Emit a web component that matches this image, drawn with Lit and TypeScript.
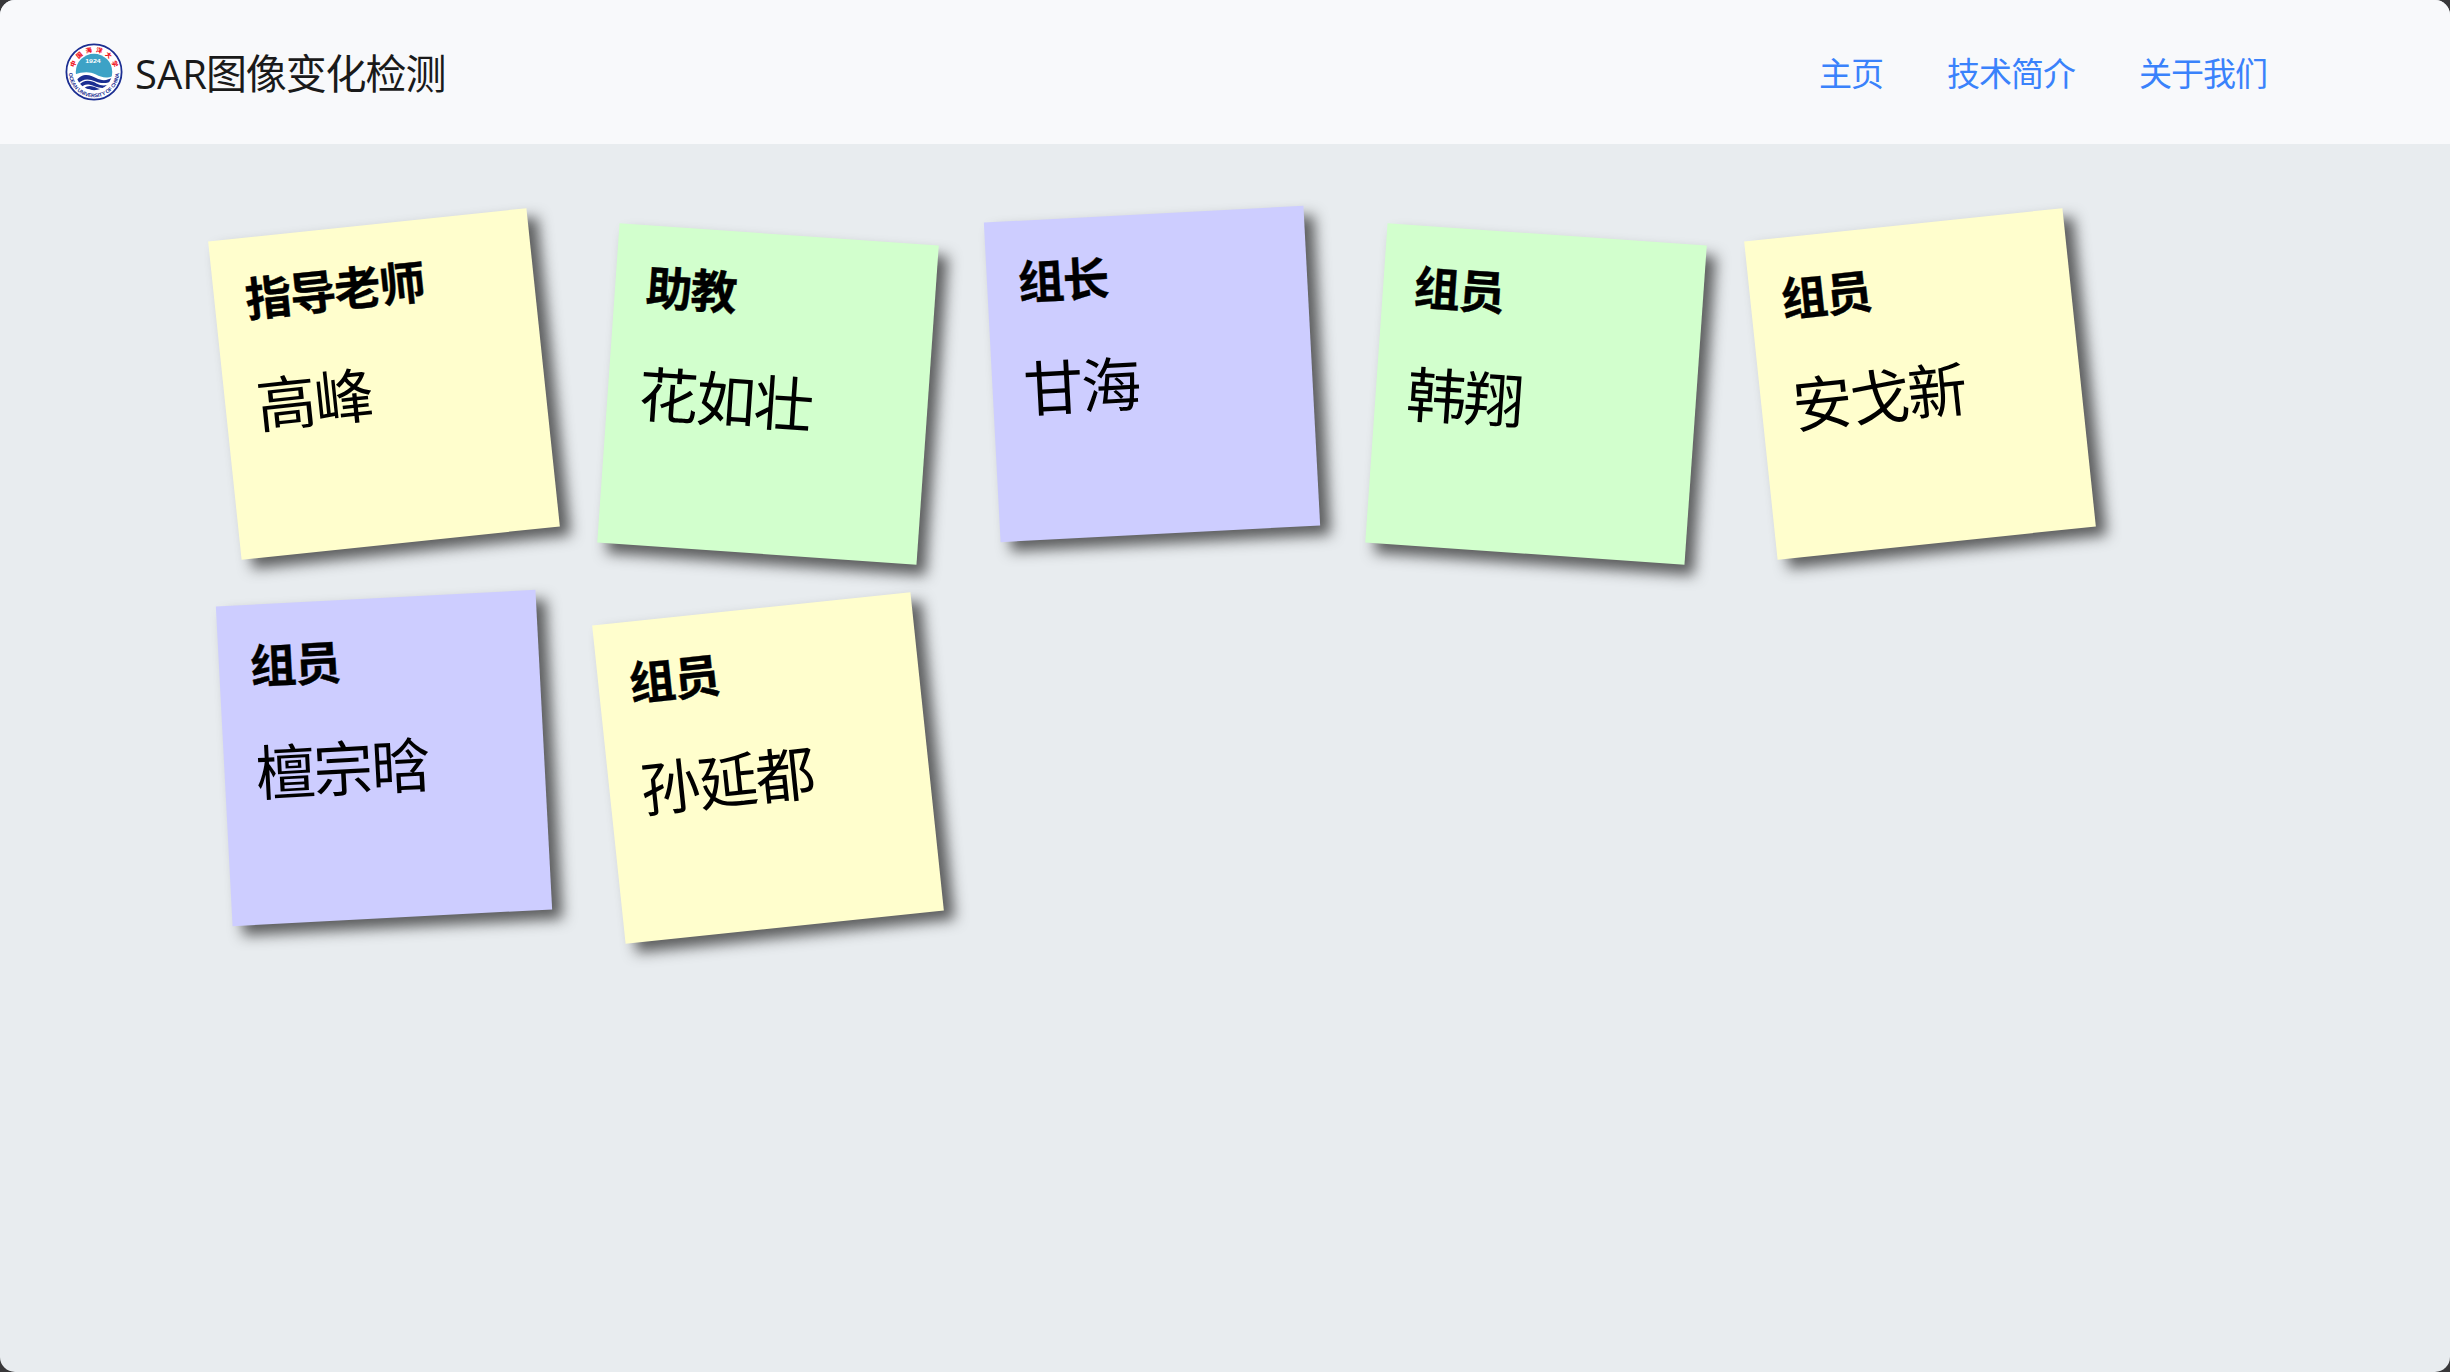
import { LitElement, html, css, svg } from "lit";
import { customElement, property } from "lit/decorators.js";

interface Member {
  role: string;
  name: string;
  tone: "yellow" | "green" | "violet";
}

const MEMBERS: Member[] = [
  { role: "指导老师", name: "高峰", tone: "yellow" },
  { role: "助教", name: "花如壮", tone: "green" },
  { role: "组长", name: "甘海", tone: "violet" },
  { role: "组员", name: "韩翔", tone: "green" },
  { role: "组员", name: "安戈新", tone: "yellow" },
  { role: "组员", name: "檀宗晗", tone: "violet" },
  { role: "组员", name: "孙延都", tone: "yellow" },
];

const LINKS = ["主页", "技术简介", "关于我们"];

@customElement("school-emblem")
export class SchoolEmblem extends LitElement {
  static styles = css`
    :host { display: block; width: 58px; height: 58px; }
    svg { display: block; width: 100%; height: 100%; }
    .zh { font: 900 12.5px "Noto Sans CJK SC", sans-serif; fill: #f01426; }
    .en { font: 700 10.5px "Liberation Sans", sans-serif; fill: #1c2f92; }
    .year { font: 700 10px "Liberation Sans", sans-serif; fill: #fff; }
  `;

  render() {
    return svg`<svg viewBox="0 0 116 116">
      <defs>
        <path id="top" d="M18 58 A40 40 0 0 1 98 58" />
        <path id="bottom" d="M7.5 58 A50.5 50.5 0 0 0 108.5 58" />
        <clipPath id="disc"><circle cx="58" cy="58" r="36.5" /></clipPath>
      </defs>
      <circle cx="58" cy="58" r="55.2" fill="#fff" stroke="#1c2f92" stroke-width="3.6" />
      <g clip-path="url(#disc)">
        <path fill="#3da2c6" d="M20 20H96V66C82 72 72 68 62 63C48 56 34 58 20 63Z" />
        <g fill="#1c2f92">
          <path d="M20 78C34 58 50 63 62 70C74 76 84 76 96 68V75C84 82 72 81 61 77C46 70 34 72 26 82Z" />
          <path d="M27 86C36 72 52 74 63 81C74 87 84 86 93 79L90 85C80 92 70 90 60 87C46 81 38 82 33 89Z" />
          <path d="M38 91C46 83 56 86 66 91C72 93 78 93 84 90C76 98 66 99 54 95C49 92 44 92 41 94Z" />
        </g>
      </g>
      <text class="zh" text-anchor="middle"><textPath href="#top" startOffset="50%" textLength="108">中国海洋大学</textPath></text>
      <text class="year" x="56" y="40" text-anchor="middle" textLength="31" lengthAdjust="spacingAndGlyphs">1924</text>
      <text class="en"><textPath href="#bottom" startOffset="2" textLength="154">OCEAN UNIVERSITY OF CHINA</textPath></text>
    </svg>`;
  }
}

@customElement("sticky-note")
export class StickyNote extends LitElement {
  @property() role = "";
  @property() name = "";

  static styles = css`
    :host {
      display: block;
      box-sizing: border-box;
      width: 320px;
      height: 320px;
      padding: 35px 30px 30px 31px;
      color: #000;
      box-shadow: 10px 10px 14px rgba(33, 33, 33, 0.7);
    }
    .role {
      margin: 0;
      font-size: 46.3px;
      font-weight: 700;
      letter-spacing: -1.5px;
      line-height: 54px;
      white-space: nowrap;
      -webkit-text-stroke: 0.4px #000;
    }
    .name {
      margin: 36px 0 0;
      font-size: 59.8px;
      font-weight: 400;
      letter-spacing: -2px;
      line-height: 86px;
      white-space: nowrap;
    }
  `;

  render() {
    return html`<h2 class="role">${this.role}</h2>
      <p class="name">${this.name}</p>`;
  }
}

@customElement("app-root")
export class AppRoot extends LitElement {
  static styles = css`
    :host {
      display: block;
      height: 100vh;
      background: #38383a;
      font-family: "Open Sans", "Noto Sans CJK SC", sans-serif;
    }
    .page { height: 100%; background: #e8ecef; border-radius: 15px; overflow: hidden; }
    .bar {
      box-sizing: border-box;
      height: 144px;
      padding: 0 183px 0 65px;
      display: flex;
      align-items: center;
      justify-content: space-between;
      background: #f8f9fb;
    }
    .brand { display: flex; align-items: center; gap: 12px; }
    .title { padding-top: 2px; font-size: 40px; color: #1a1a1a; line-height: 60px; }
    .title-zh { margin-left: -1px; font-size: 41px; letter-spacing: -1.1px; }
    .links { display: flex; gap: 64px; padding-top: 3px; font-size: 33px; letter-spacing: -1px; line-height: 48px; }
    .link { color: #3a82fb; text-decoration: none; }
    .notes {
      display: grid;
      grid-template-columns: repeat(5, 320px);
      gap: 64px;
      padding: 80px 0 0 224px;
      margin: 0;
      list-style: none;
    }
    .item { display: block; }
    .yellow { background: #fffecd; transform: rotate(-6deg); }
    .green { background: #d2ffcd; transform: translateY(10px) rotate(4deg); }
    .violet { background: #cdcdff; transform: translateY(-10px) rotate(-3deg); }
  `;

  render() {
    return html`<div class="page">
      <nav class="bar">
        <div class="brand"><school-emblem></school-emblem><span class="title">SAR<span class="title-zh">图像变化检测</span></span></div>
        <div class="links">${LINKS.map((label) => html`<a class="link" href="#">${label}</a>`)}</div>
      </nav>
      <ul class="notes">
        ${MEMBERS.map(
          (m) => html`<li class="item">
            <sticky-note class=${m.tone} .role=${m.role} .name=${m.name}></sticky-note>
          </li>`,
        )}
      </ul>
    </div>`;
  }
}
